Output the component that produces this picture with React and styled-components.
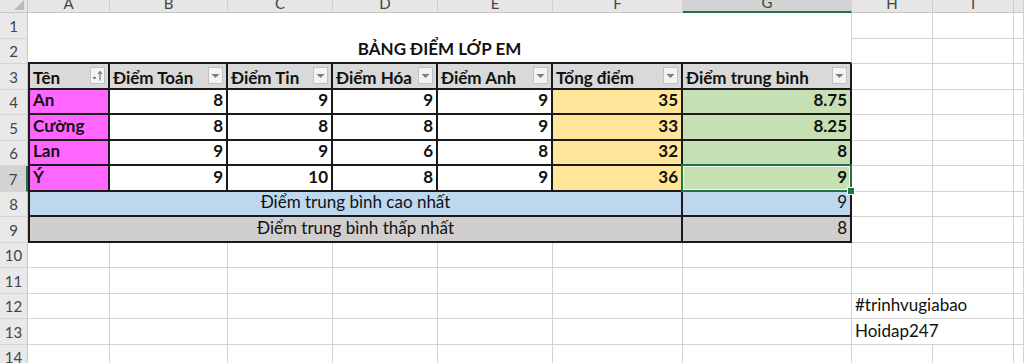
import styled, { createGlobalStyle } from 'styled-components';

const GlobalStyle = createGlobalStyle`
    html, body {
        margin: 0;
        padding: 0;
        background: #fff;
    }

    body {
        font-family: Lato, 'Liberation Sans', sans-serif;
        overflow: hidden;
    }
`;

const LINE = '1px solid #d4d4d4';
const INK = '2px solid #1a1a1a';

const COLUMNS = ['A', 'B', 'C', 'D', 'E', 'F', 'G', 'H', 'I', ''];

const HEADERS = [
    { label: 'Tên', sort: true },
    { label: 'Điểm Toán' },
    { label: 'Điểm Tin' },
    { label: 'Điểm Hóa' },
    { label: 'Điểm Anh' },
    { label: 'Tổng điểm' },
    { label: 'Điểm trung bình' }
];

const STUDENTS = [
    ['An', 8, 9, 9, 9, 35, '8.75'],
    ['Cường', 8, 8, 8, 9, 33, '8.25'],
    ['Lan', 9, 9, 6, 8, 32, 8],
    ['Ý', 9, 10, 8, 9, 36, 9]
];

const NOTES = { 12: '#trinhvugiabao', 13: 'Hoidap247' };

const Sheet = styled.div`
    display: grid;
    grid-template-columns: 28px 82px 118px 105px 105px 115px 130px 169px 81px 81px 1fr;
    grid-template-rows: 13px repeat(14, 25.5px);
    width: 1024px;
    height: 363px;
    overflow: hidden;
    color: #111;
`;

const Corner = styled.div`
    position: relative;
    background: #e6e6e6;
    border-right: 1px solid #c6c6c6;
    border-bottom: 1px solid #c6c6c6;
    overflow: hidden;

    &::after {
        content: '';
        position: absolute;
        right: 3px;
        bottom: 2px;
        border-left: 10px solid transparent;
        border-bottom: 10px solid #b9b9b9;
    }
`;

const ColHead = styled.div`
    display: flex;
    align-items: flex-end;
    justify-content: center;
    overflow: hidden;
    background: ${({ $active }) => ($active ? '#d3d3d3' : '#e6e6e6')};
    border-right: 1px solid #cfcfcf;
    border-bottom: ${({ $active }) =>
        $active ? '2px solid #217346' : '1px solid #c6c6c6'};
    color: #444;
    font-size: 15px;
    line-height: 17px;
`;

const RowHead = styled.div`
    display: flex;
    align-items: flex-end;
    justify-content: center;
    padding-bottom: 3px;
    background: ${({ $active }) => ($active ? '#d3d3d3' : '#e9e9e9')};
    border-right: ${({ $active }) =>
        $active ? '2px solid #217346' : '1px solid #c6c6c6'};
    border-bottom: 1px solid #d6d6d6;
    color: #444;
    font-size: 15px;
    line-height: 18px;
`;

const Cell = styled.div`
    position: relative;
    display: flex;
    align-items: flex-end;
    justify-content: ${({ $align }) =>
        $align === 'right'
            ? 'flex-end'
            : $align === 'center'
            ? 'center'
            : 'flex-start'};
    padding: 0 3px 3px;
    grid-column: ${({ $span }) => ($span ? `span ${$span}` : 'auto')};
    background: ${({ $bg }) => $bg || '#fff'};
    border-left: ${({ $edge }) => ($edge ? INK : 'none')};
    border-right: ${({ $ink }) => ($ink ? INK : LINE)};
    border-bottom: ${({ $ink }) => ($ink ? INK : LINE)};
    font-size: 17px;
    line-height: 20px;
    font-weight: ${({ $bold }) => ($bold ? 700 : 400)};
    white-space: nowrap;
`;

const Title = styled(Cell)`
    grid-column: 2 / span 7;
    grid-row: 2 / span 2;
    justify-content: center;
    border-right: ${LINE};
    border-bottom: ${INK};
    font-weight: 700;
`;

const HeadCell = styled(Cell)`
    align-items: center;
    justify-content: space-between;
    padding: 0 3px;
    background: #d9d9d9;
    font-weight: 700;
`;

const HeadLabel = styled.span`
    padding-top: 4px;
`;

const FilterButton = styled.span`
    display: flex;
    align-items: center;
    justify-content: center;
    width: 15px;
    height: 17px;
    flex-shrink: 0;
    box-sizing: border-box;
    background: #f3f3f3;
    border: 1px solid #c2c2c2;
`;

const Selection = styled.span`
    position: absolute;
    top: -2px;
    left: -2px;
    right: -2px;
    bottom: -2px;
    z-index: 2;
    border: 2px solid #217346;
    box-shadow: inset 0 0 0 1px #fff;
    pointer-events: none;
`;

const Handle = styled.span`
    position: absolute;
    right: -5px;
    bottom: -5px;
    width: 6px;
    height: 6px;
    background: #217346;
    border: 1px solid #fff;
`;

const FilterIcon = ({ sort }) => (
    <FilterButton>
        {sort ? (
            <svg width='13' height='15' viewBox='0 0 13 15'>
                <path d='M1.5 9 h4 l-2 2.5 z' fill='#6b6b6b' />
                <path d='M9 3.5 V12.5' stroke='#555' strokeWidth='1' />
                <path d='M7 6 L9 3.5 L11 6' stroke='#555' strokeWidth='1' fill='none' />
            </svg>
        ) : (
            <svg width='9' height='6' viewBox='0 0 9 6'>
                <path d='M0.5 1 H8.5 L4.5 5 Z' fill='#7c7c7c' />
            </svg>
        )}
    </FilterButton>
);

const TAIL = [8, 9, 10];

const Blank = ({ count = 3 }) =>
    TAIL.slice(0, count).map((i) => <Cell key={i} />);

const Row = ({ num, row, last }) => (
    <>
        <RowHead $active={last}>{num}</RowHead>
        {row.map((v, i) => (
            <Cell
                key={i}
                $ink
                $bold
                $edge={i === 0}
                $align={i === 0 ? 'left' : 'right'}
                $bg={
                    i === 0
                        ? '#ff66ff'
                        : i === 5
                        ? '#ffe699'
                        : i === 6
                        ? '#c6e0b4'
                        : undefined
                }
            >
                {v}
                {last && i === 6 && (
                    <Selection>
                        <Handle />
                    </Selection>
                )}
            </Cell>
        ))}
        <Blank />
    </>
);

const Plain = ({ num }) => (
    <>
        <RowHead>{num}</RowHead>
        {Array.from({ length: 7 }, (_, i) => (
            <Cell key={i} />
        ))}
        {NOTES[num] ? (
            <>
                <Cell $span={2}>{NOTES[num]}</Cell>
                <Cell />
            </>
        ) : (
            <Blank />
        )}
    </>
);

const App = () => {
    return (
        <>
            <GlobalStyle />
            <Sheet>
                <Corner />
                {COLUMNS.map((c, i) => (
                    <ColHead key={i} $active={c === 'G'}>
                        {c}
                    </ColHead>
                ))}

                <RowHead>1</RowHead>
                <Title>BẢNG ĐIỂM LỚP EM</Title>
                <Blank />
                <RowHead>2</RowHead>
                <Blank />

                <RowHead>3</RowHead>
                {HEADERS.map((h, i) => (
                    <HeadCell key={h.label} $ink $edge={i === 0}>
                        <HeadLabel>{h.label}</HeadLabel>
                        <FilterIcon sort={h.sort} />
                    </HeadCell>
                ))}
                <Blank />

                {STUDENTS.map((row, r) => (
                    <Row key={row[0]} num={r + 4} row={row} last={r === 3} />
                ))}

                <RowHead>8</RowHead>
                <Cell $span={6} $align='center' $bg='#bdd7ee' $ink $edge>
                    Điểm trung bình cao nhất
                </Cell>
                <Cell $align='right' $bg='#bdd7ee' $ink>
                    9
                </Cell>
                <Blank />

                <RowHead>9</RowHead>
                <Cell $span={6} $align='center' $bg='#d0cece' $ink $edge>
                    Điểm trung bình thấp nhất
                </Cell>
                <Cell $align='right' $bg='#d0cece' $ink>
                    8
                </Cell>
                <Blank />

                {[10, 11, 12, 13, 14].map((n) => (
                    <Plain key={n} num={n} />
                ))}
            </Sheet>
        </>
    );
};

export default App;
